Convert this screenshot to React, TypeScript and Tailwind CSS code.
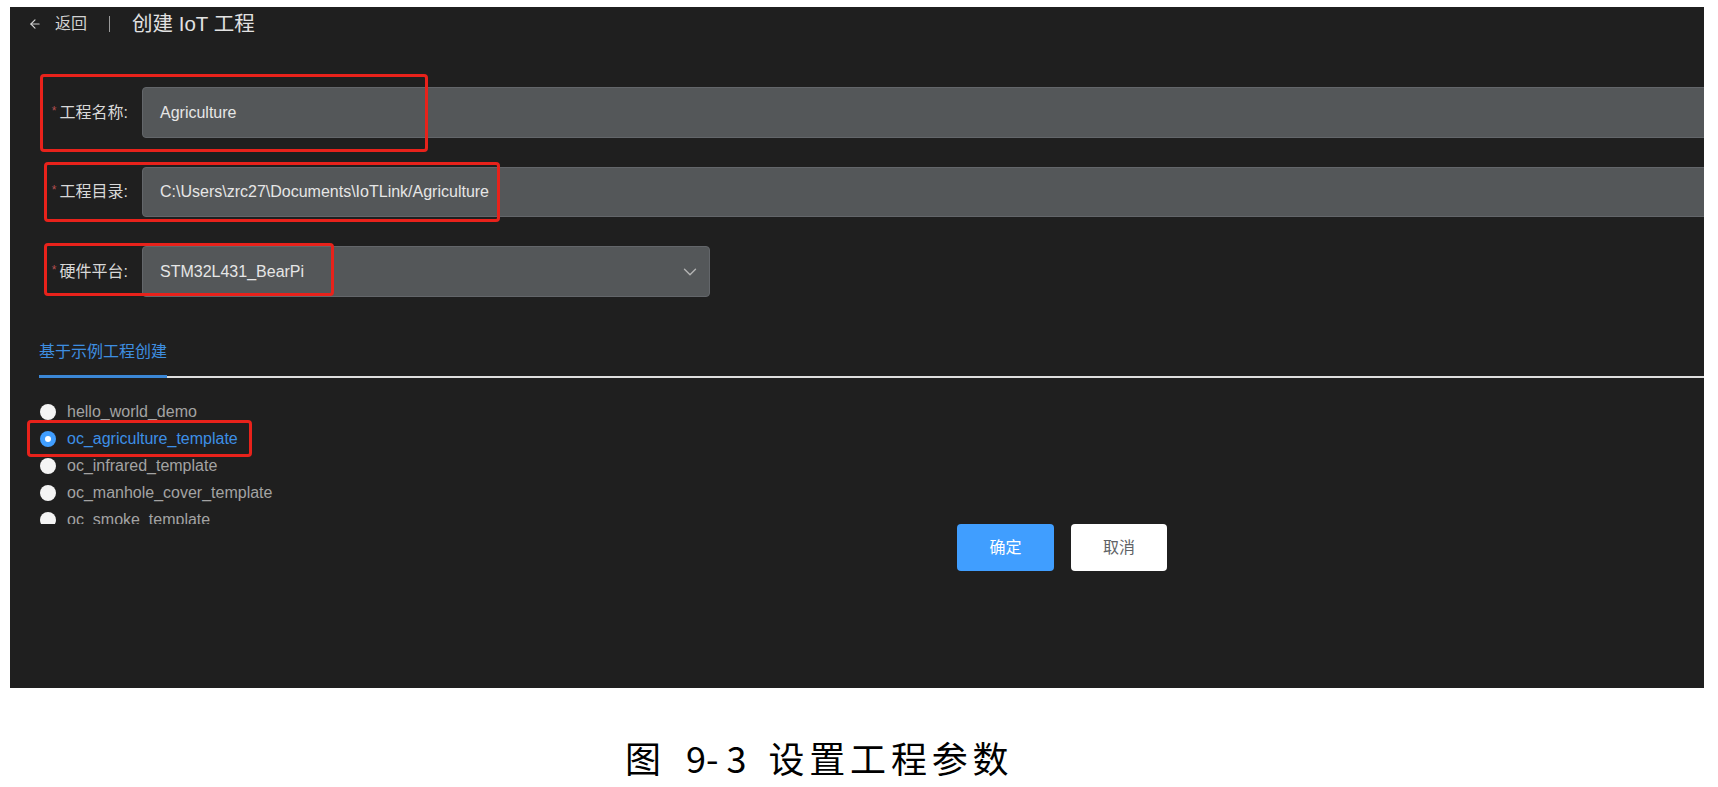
import { ArrowLeft, ChevronDown } from 'lucide-react';

const templates = [
  'hello_world_demo',
  'oc_agriculture_template',
  'oc_infrared_template',
  'oc_manhole_cover_template',
  'oc_smoke_template',
  'oc_streetlight_template',
  'oc_track_template',
];

function FieldLabel({ text }: { text: string }) {
  return (
    <div className="w-[132px] shrink-0 flex items-center justify-end pr-[14px] text-[16px] text-[#d8d8d8]">
      <span className="text-[#b4504f] text-[12px] mr-[3px] -mt-[4px]">*</span>
      <span>{text}:</span>
    </div>
  );
}

function Radio({ label, checked }: { label: string; checked?: boolean }) {
  return (
    <div className="h-[27px] flex items-center gap-[11px] text-[16px]">
      {checked ? (
        <span className="size-[16px] rounded-full bg-[#409eff] flex items-center justify-center">
          <span className="size-[6px] rounded-full bg-white" />
        </span>
      ) : (
        <span className="size-[16px] rounded-full bg-[#f4f4f4]" />
      )}
      <span className={checked ? 'text-[#3d8fe6]' : 'text-[#a3a3a3]'}>{label}</span>
    </div>
  );
}

export default function App() {
  return (
    <div className="w-[1718px] h-[787px] bg-white font-['Liberation_Sans','Noto_Sans_CJK_SC',sans-serif] overflow-hidden">
      <div className="relative ml-[10px] mt-[7px] w-[1694px] h-[681px] bg-[#1f1f1f] overflow-hidden">
        {/* header */}
        <div className="h-[34px] flex items-center pl-[18px] text-[#d2d2d2]">
          <ArrowLeft size={14} strokeWidth={2} />
          <span className="ml-[13px] text-[16px]">返回</span>
          <span className="ml-[22px] w-px h-[16px] bg-[#9a9a9a]" />
          <span className="ml-[22px] text-[20.5px] text-[#e2e2e2]">创建 IoT 工程</span>
        </div>

        {/* form */}
        <div className="mt-[46px] flex flex-col gap-[29px]">
          <div className="flex h-[51px]">
            <FieldLabel text="工程名称" />
            <div className="flex-1 -mr-[8px] flex items-center pl-[17px] bg-[#545759] border border-[#63666a] rounded-[4px] text-[16px] text-[#e6e6e6]">
              Agriculture
            </div>
          </div>
          <div className="flex h-[50px]">
            <FieldLabel text="工程目录" />
            <div className="flex-1 -mr-[8px] flex items-center pl-[17px] bg-[#545759] border border-[#63666a] rounded-[4px] text-[16px] text-[#e6e6e6]">
              C:\Users\zrc27\Documents\IoTLink/Agriculture
            </div>
          </div>
          <div className="flex h-[51px]">
            <FieldLabel text="硬件平台" />
            <div className="w-[568px] flex items-center justify-between pl-[17px] pr-[8px] bg-[#545759] border border-[#63666a] rounded-[4px] text-[16px] text-[#e6e6e6]">
              <span>STM32L431_BearPi</span>
              <ChevronDown size={22} strokeWidth={1.5} className="text-[#b4b4b4]" />
            </div>
          </div>
        </div>

        {/* tab */}
        <div className="ml-[29px] mt-[45px]">
          <div className="text-[16px] leading-[20px] text-[#3e8ee0]">基于示例工程创建</div>
          <div className="mt-[13px] flex items-end h-[3px]">
            <div className="w-[128px] h-[3px] bg-[#3b87d6]" />
            <div className="flex-1 h-[2px] bg-[#dedede]" />
          </div>
        </div>

        {/* template list, scrolled box */}
        <div className="ml-[30px] mt-[20px] h-[126px] overflow-hidden">
          {templates.map((t) => (
            <Radio key={t} label={t} checked={t === 'oc_agriculture_template'} />
          ))}
        </div>

        {/* actions */}
        <div className="flex gap-[17px] pl-[947px]">
          <button className="w-[97px] h-[47px] rounded-[4px] bg-[#409eff] text-white text-[16px]">确定</button>
          <button className="w-[96px] h-[47px] rounded-[4px] bg-white text-[#606266] text-[16px]">取消</button>
        </div>

        {/* annotation boxes */}
        <div className="absolute left-[30px] top-[67px] w-[388px] h-[78px] border-[3px] border-[#e8221b] rounded-[4px]" />
        <div className="absolute left-[34px] top-[155px] w-[456px] h-[60px] border-[3px] border-[#e8221b] rounded-[4px]" />
        <div className="absolute left-[34px] top-[236px] w-[290px] h-[53px] border-[3px] border-[#e8221b] rounded-[4px]" />
        <div className="absolute left-[17px] top-[413px] w-[225px] h-[37px] border-[3px] border-[#e8221b] rounded-[4px]" />
      </div>

      {/* caption */}
      <div className="mt-[47px] pl-[625px] flex items-center h-[44px] text-[36px] text-black font-['Noto_Sans_CJK_SC',sans-serif]">
        <span>图</span>
        <span className="ml-[25px]">9-</span>
        <span className="ml-[8px]">3</span>
        <span className="ml-[22px] tracking-[4.8px]">设置工程参数</span>
      </div>
    </div>
  );
}
